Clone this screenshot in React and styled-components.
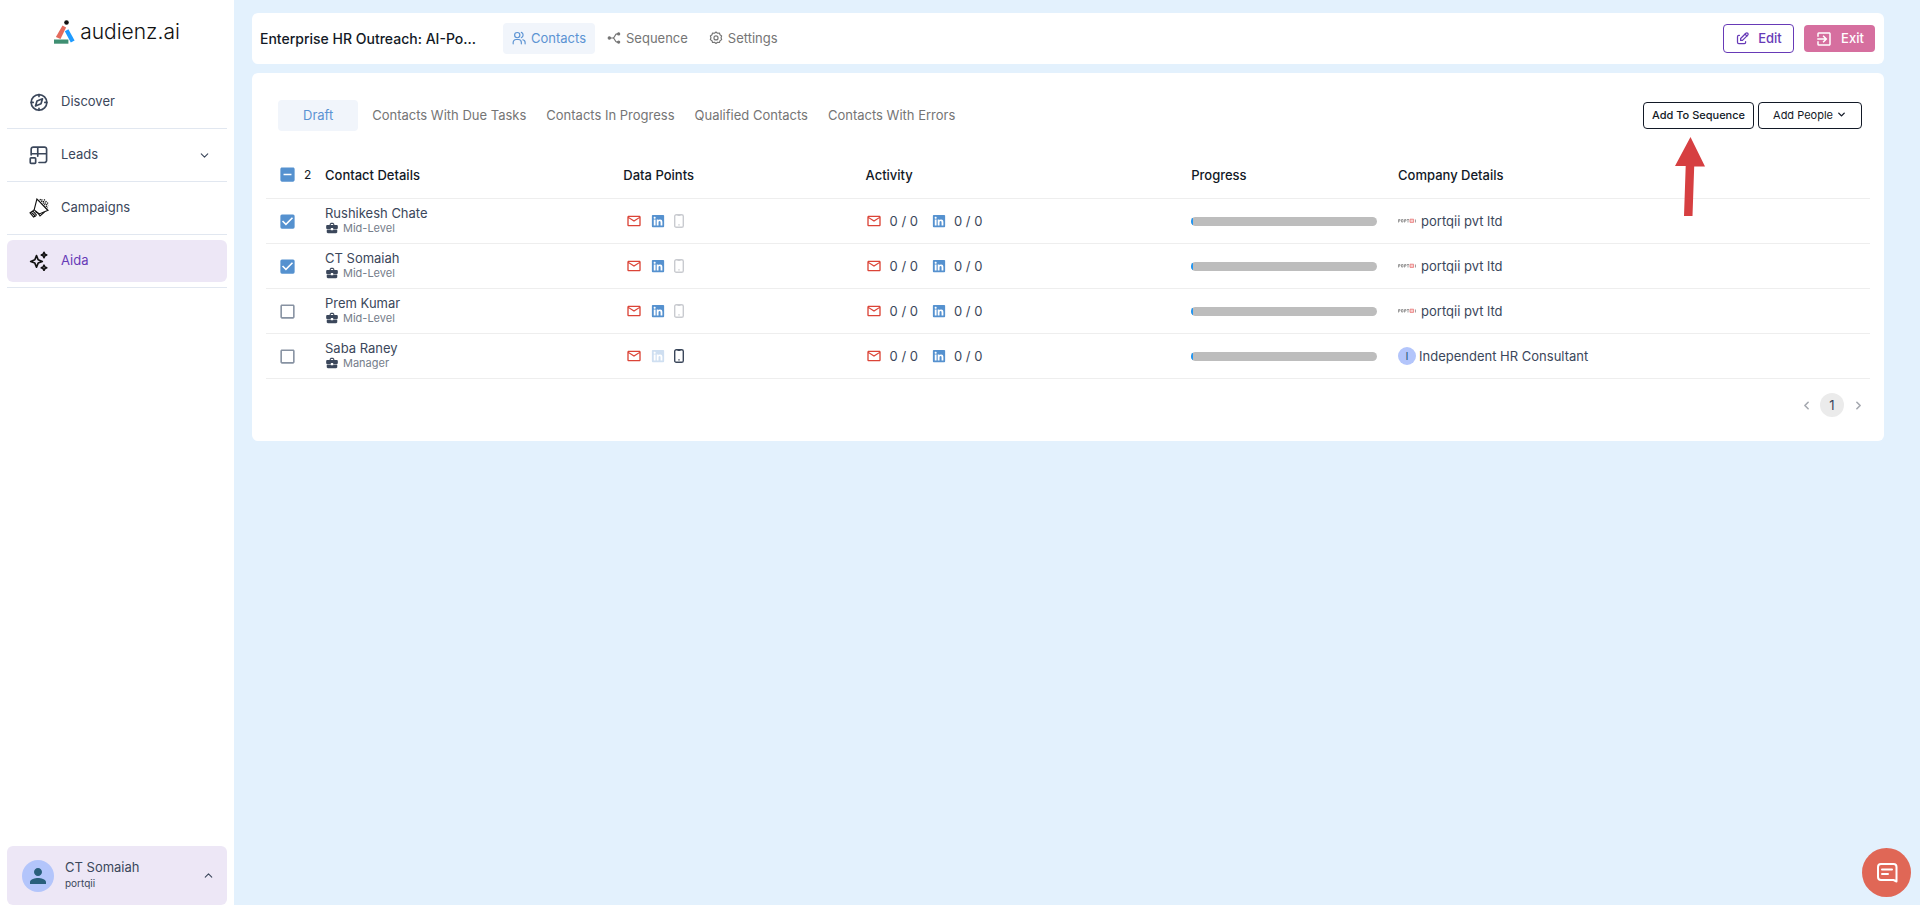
import { useState } from "react";
import styled, { createGlobalStyle, css } from "styled-components";
import {
  MdBusinessCenter,
  MdCheckBox,
  MdCheckBoxOutlineBlank,
  MdExitToApp,
  MdIndeterminateCheckBox,
  MdMailOutline,
  MdPerson,
} from "react-icons/md";
import { TbEdit } from "react-icons/tb";
import { FaLinkedin } from "react-icons/fa";
import { ChevronDown, ChevronLeft, ChevronRight, ChevronUp } from "lucide-react";

const GlobalStyle = createGlobalStyle`
  * {
    box-sizing: border-box;
  }

  body {
    margin: 0;
    background: #e3f1fd;
    color: #3b475b;
    font-family: Inter, "Liberation Sans", sans-serif;
    font-size: 13px;
    line-height: 16px;
  }

  button {
    font: inherit;
    cursor: pointer;
  }
`;

const Page = styled.div`
  display: flex;
  min-height: 100vh;
`;

// Sidebar
const Sidebar = styled.aside`
  position: sticky;
  top: 0;
  display: flex;
  flex-direction: column;
  flex: 0 0 234px;
  height: 100vh;
  padding: 0 7px;
  background: #fff;
`;

const Brand = styled.a`
  display: flex;
  align-items: center;
  justify-content: center;
  gap: 5px;
  height: 76px;
  padding-bottom: 12px;
  color: #111;
  font-size: 21px;
  font-weight: 300;
  line-height: 24px;
  text-decoration: none;
`;

const NavItem = styled.div`
  padding: 5px 0;
  border-bottom: 1px solid #e1e7f0;
`;

const NavLink = styled.a`
  display: flex;
  align-items: center;
  height: 42px;
  padding: 0 16px 0 22px;
  border-radius: 6px;
  background: ${(props) => (props.$active ? "#ede7f6" : "transparent")};
  color: ${(props) => (props.$active ? "#673ab7" : "#3b475b")};
  text-decoration: none;

  svg:first-child {
    flex: none;
    margin-right: 12px;
  }

  span {
    flex: 1;
    padding-bottom: 2px;
  }
`;

const UserCard = styled.button`
  display: flex;
  align-items: center;
  gap: 11px;
  height: 59px;
  margin-top: auto;
  padding: 0 12px 0 15px;
  border: 0;
  border-radius: 6px;
  background: #ede7f6;
  color: #3b475b;
  text-align: left;
`;

const Avatar = styled.span`
  display: flex;
  flex: none;
  align-items: center;
  justify-content: center;
  width: ${(props) => props.$size}px;
  height: ${(props) => props.$size}px;
  border-radius: 50%;
  background: #b3c5fb;
  color: #285f7c;
  font-size: 11px;
`;

const UserText = styled.span`
  display: flex;
  flex: 1;
  flex-direction: column;
  padding-bottom: 2px;

  small {
    font-size: 10px;
  }
`;

// Main column
const Main = styled.main`
  display: flex;
  flex: 1;
  flex-direction: column;
  gap: 9px;
  min-width: 0;
  padding: 13px 36px 13px 18px;
`;

const TopBar = styled.header`
  display: flex;
  align-items: center;
  height: 51px;
  padding: 0 9px 0 8px;
  border-radius: 6px;
  background: #fff;
`;

const Title = styled.h1`
  width: 226px;
  margin: 0 17px 0 0;
  color: #121926;
  font-size: 14px;
  font-weight: 500;
  line-height: 20px;
  white-space: nowrap;
`;

const TopTabs = styled.nav`
  display: flex;
  gap: 3px;
  margin-right: auto;
`;

const tabStyle = css`
  display: flex;
  align-items: center;
  height: 31px;
  border: 0;
  border-radius: 4px;
  background: ${(props) => (props.$active ? "#f1f5fb" : "transparent")};
  color: ${(props) => (props.$active ? "#5b93d3" : "#757575")};
`;

const TopTab = styled.button`
  ${tabStyle}
  gap: 5px;
  padding: 0 9px 2px;
`;

const Actions = styled.div`
  display: flex;
  align-items: center;
  gap: 10px;
`;

const ActionButton = styled.button`
  display: flex;
  align-items: center;
  justify-content: center;
  gap: 8px;
  width: 71px;
  height: ${(props) => (props.$filled ? 27 : 29)}px;
  padding: 0;
  border: ${(props) => (props.$filled ? "0" : "1px solid #673ab7")};
  border-radius: 4px;
  background: ${(props) => (props.$filled ? "#d66f9f" : "#fff")};
  color: ${(props) => (props.$filled ? "#fff" : "#673ab7")};
  font-weight: 500;

  span {
    padding-bottom: 2px;
  }
`;

const Panel = styled.section`
  padding: 27px 14px 24px;
  border-radius: 6px;
  background: #fff;
`;

const PanelBar = styled.div`
  display: flex;
  align-items: center;
  justify-content: space-between;
  padding: 0 8px 0 12px;
`;

const Filters = styled.div`
  display: flex;
`;

const Filter = styled.button`
  ${tabStyle}
  padding: 0 ${(props) => (props.$active ? 25 : 10)}px 2px;
  margin-right: ${(props) => (props.$active ? 4 : 0)}px;
`;

const PanelActions = styled.div`
  position: relative;
  display: flex;
  gap: 4px;
`;

const OutlineButton = styled.button`
  display: flex;
  align-items: center;
  justify-content: center;
  gap: 3px;
  height: 27px;
  padding: 0 ${(props) => (props.$wide ? 14 : 8)}px 2px;
  border: 1px solid #121926;
  border-radius: 4px;
  background: #fff;
  color: #121926;
  font-size: 11px;
  font-weight: ${(props) => (props.$wide ? 400 : 500)};
`;

const Pointer = styled.svg`
  position: absolute;
  top: 35px;
  left: 32px;
  pointer-events: none;
`;

// Contacts table
const Table = styled.table`
  width: 100%;
  margin-top: 20px;
  border-collapse: separate;
  border-spacing: 0;
  table-layout: fixed;

  th,
  td {
    padding: 0;
    border-bottom: 1px solid #eeeeee;
    text-align: left;
    vertical-align: middle;
  }

  th {
    height: 48px;
    color: #121926;
    font-weight: 500;
  }

  td {
    height: 45px;
  }
`;

const Col = styled.col`
  width: ${(props) => props.$width};
`;

const CheckCell = styled.div`
  display: flex;
  align-items: center;
  gap: 7px;
  padding-left: 12px;
  font-size: 12px;
  font-weight: 400;
`;

const CheckLabel = styled.label`
  position: relative;
  display: flex;
  color: ${(props) => (props.$on ? "#5591cf" : "#8792a2")};
  cursor: pointer;

  input {
    position: absolute;
    inset: 0;
    margin: 0;
    opacity: 0;
  }
`;

const Contact = styled.div`
  padding-bottom: 2px;
`;

const Level = styled.div`
  display: flex;
  align-items: center;
  gap: 4px;
  color: #757d8a;
  font-size: 11px;
  line-height: 14px;

  svg {
    color: #3b475b;
  }
`;

const Points = styled.div`
  display: flex;
  align-items: center;
  gap: 9px;
  padding-left: 3px;
`;

const IconTint = styled.span`
  display: flex;
  color: ${(props) => props.$color};
`;

const Activity = styled.div`
  display: flex;
  align-items: center;
  gap: 8px;

  span + svg {
    margin-left: 6px;
  }
`;

const Track = styled.div`
  width: 90%;
  height: 9px;
  overflow: hidden;
  border-radius: 5px;
  background: #bdbdbd;
`;

const Fill = styled.div`
  height: 100%;
  background: #2196f3;
`;

const Company = styled.div`
  display: flex;
  align-items: center;
  gap: ${(props) => (props.$logo ? 5 : 3)}px;
`;

const Pagination = styled.nav`
  display: flex;
  align-items: center;
  justify-content: flex-end;
  gap: 4px;
  margin-top: 14px;
  padding-right: 2px;
`;

const PageButton = styled.button`
  display: flex;
  align-items: center;
  justify-content: center;
  width: ${(props) => (props.$current ? 24 : 20)}px;
  height: 24px;
  padding: 0;
  border: 0;
  border-radius: 50%;
  background: ${(props) => (props.$current ? "#ebebeb" : "transparent")};
  color: ${(props) => (props.$current ? "#3b475b" : "#a5a9b0")};
`;

const ChatButton = styled.button`
  position: fixed;
  right: 9px;
  bottom: 8px;
  display: flex;
  align-items: center;
  justify-content: center;
  width: 49px;
  height: 49px;
  padding: 0;
  border: 0;
  border-radius: 50%;
  background: #e06756;
  color: #fff;
`;

// Drawings
const LogoMark = () => (
  <svg width="21" height="24" viewBox="0 0 21 24">
    <circle cx="12.5" cy="2.5" r="2.3" fill="#111" />
    <path d="M8.5 5.6l3.6 1.8-5.6 11.6-4.6-2z" fill="#e36a5c" />
    <path d="M10.8 11.2l3.6-2 6.2 11.2-3.8 2z" fill="#1e9bff" />
    <path d="M0 19.5h14.4v4.2H0z" fill="#3f8f72" />
  </svg>
);

const Stroke = ({ size = 20, width = 2, children }) => (
  <svg
    width={size}
    height={size}
    viewBox="0 0 24 24"
    fill="none"
    stroke="currentColor"
    strokeWidth={width}
    strokeLinecap="round"
    strokeLinejoin="round"
  >
    {children}
  </svg>
);

const DiscoverIcon = () => (
  <Stroke>
    <circle cx="12" cy="12.5" r="9.4" />
    <path d="M12 3v2.5M12 19.5V22M2.6 12.5H5M19 12.5h2.4" />
    <path d="M16.2 8.2l-1.8 6-6.6 2.6 1.8-6z" />
  </Stroke>
);

const LeadsIcon = () => (
  <Stroke>
    <path d="M2.6 12V5a2.500 2.500 0 0 1 2.500-2.500h13.500a2.500 2.500 0 0 1 2.500 2.500v13.500a2.500 2.500 0 0 1-2.500 2.500H12M2.6 10.500h18.500M10.500 2.500v11" />
    <rect x="1.5" y="15.5" width="6.5" height="6.5" rx="1" />
  </Stroke>
);

const CampaignIcon = () => (
  <svg width="20" height="20" viewBox="0 0 24 24" fill="none" stroke="#111" strokeWidth="1.3">
    <path d="M9.5 1.2L6.2 14.2l6 5L23 14.8z" />
    <path d="M6.2 14.2l-5 3.6 4.3 5 3.6-2M12.2 19.2l-4.6-3M2.5 16.8l5.5 5.4M4.5 15.4l4.6 5.2" />
    <path d="M11.6 19l1.6 2.4 5.4-4.6" />
    <path d="M11 2.200l10.500 12" strokeWidth="1" />
    <path d="M13 1.500l9.500 10.500M15 1.800l8 8M18 1.800l5 5" strokeWidth="1.5" strokeDasharray="1.500 1.200" />
  </svg>
);

const AidaIcon = () => (
  <svg width="20" height="20" viewBox="0 0 24 24" fill="none" stroke="#111" strokeWidth="2" strokeLinejoin="round">
    <path d="M9 5.5l2 5 5 2-5 2-2 5-2-5-5-2 5-2z" />
    <path d="M18 1.6l1 2.2 2.2 1-2.2 1-1 2.2-1-2.2-2.2-1 2.2-1zM18 17l1 2.2 2.2 1-2.2 1-1 2.2-1-2.2-2.2-1 2.2-1z" />
  </svg>
);

const ContactsIcon = () => (
  <Stroke size={14}>
    <circle cx="9" cy="7" r="4.5" />
    <path d="M2 22v-2.5a5 5 0 0 1 5-5h4a5 5 0 0 1 5 5V22M16 2.4a5 5 0 0 1 0 9.2M18.5 15a5 5 0 0 1 4 4.8V22" />
  </Stroke>
);

const SequenceIcon = () => (
  <Stroke size={14}>
    <circle cx="4" cy="12" r="2" fill="currentColor" />
    <path d="M6 12h5M19 5h-2c-4 0-3 7-7 7 4 0 3 7 7 7h2" />
    <circle cx="20" cy="5" r="1.8" fill="currentColor" />
    <circle cx="20" cy="19" r="1.8" fill="currentColor" />
  </Stroke>
);

const SettingsIcon = () => (
  <Stroke size={14}>
    <path d="M12 1.8l2.6 2 3.3-.3 1 3.1 2.8 1.8-1 3.2 1 3.2-2.8 1.8-1 3.1-3.3-.3-2.6 2-2.6-2-3.3.3-1-3.1-2.8-1.8 1-3.2-1-3.2 2.8-1.8 1-3.1 3.3.3z" />
    <circle cx="12" cy="11.8" r="3.5" />
  </Stroke>
);

const PhoneIcon = () => (
  <svg width="10" height="14" viewBox="0 0 10 14" fill="none" stroke="currentColor">
    <rect x="0.7" y="0.7" width="8.6" height="12.6" rx="1.6" strokeWidth="1.4" />
    <path d="M3.500 1.400h3M4.300 10.800h1.400" strokeWidth="1.2" />
  </svg>
);

const ChatIcon = () => (
  <Stroke size={24}>
    <path d="M21.5 20.5l-3-1.5H6a3 3 0 0 1-3-3V6a3 3 0 0 1 3-3h12.500a3 3 0 0 1 3 3z" />
    <path d="M7 8.500h10M7 13h6" />
  </Stroke>
);

const PortqiiLogo = () => (
  <svg width="18" height="6" viewBox="0 0 18 6">
    <g fill="none" stroke="#888" strokeWidth="0.8">
      <path d="M.5 4.500V1.500h1.500v1.500H.5M3.500 1.500h1.500v2.500H3.500zM6.500 4.500V1.500H8v1.500H6.500M9 1.500h2M10 1.500v3M17.500 1.500v3" />
    </g>
    <path d="M12 1.200h3.600v3.200H12z" fill="#f9d0d0" stroke="#e87575" strokeWidth="0.8" />
  </svg>
);

const navItems = [
  { label: "Discover", icon: DiscoverIcon },
  { label: "Leads", icon: LeadsIcon, expandable: true },
  { label: "Campaigns", icon: CampaignIcon },
  { label: "Aida", icon: AidaIcon, active: true },
];

const topTabs = [
  { label: "Contacts", icon: ContactsIcon },
  { label: "Sequence", icon: SequenceIcon },
  { label: "Settings", icon: SettingsIcon },
];

const filters = [
  "Draft",
  "Contacts With Due Tasks",
  "Contacts In Progress",
  "Qualified Contacts",
  "Contacts With Errors",
];

const contacts = [
  { name: "Rushikesh Chate", level: "Mid-Level", company: "portqii pvt ltd", linkedin: true, logo: true, progress: 1 },
  { name: "CT Somaiah", level: "Mid-Level", company: "portqii pvt ltd", linkedin: true, logo: true, progress: 1 },
  { name: "Prem Kumar", level: "Mid-Level", company: "portqii pvt ltd", linkedin: true, logo: true, progress: 1 },
  { name: "Saba Raney", level: "Manager", company: "Independent HR Consultant", phone: true, progress: 1 },
];

const Check = ({ label, checked, mixed, onChange }) => {
  const Icon = mixed ? MdIndeterminateCheckBox : checked ? MdCheckBox : MdCheckBoxOutlineBlank;
  return (
    <CheckLabel $on={checked || mixed}>
      <input type="checkbox" aria-label={label} checked={checked} onChange={onChange} />
      <Icon size={19} />
    </CheckLabel>
  );
};

const ContactRow = ({ contact, checked, onToggle }) => (
  <tr>
    <td>
      <CheckCell>
        <Check label={`Select ${contact.name}`} checked={checked} onChange={onToggle} />
      </CheckCell>
    </td>
    <td>
      <Contact>
        {contact.name}
        <Level>
          <MdBusinessCenter size={14} />
          {contact.level}
        </Level>
      </Contact>
    </td>
    <td>
      <Points>
        <IconTint $color="#db4437">
          <MdMailOutline size={16} />
        </IconTint>
        <IconTint $color={contact.linkedin ? "#5591cf" : "#cfdff1"}>
          <FaLinkedin size={14} />
        </IconTint>
        <IconTint $color={contact.phone ? "#3b475b" : "#c9cbd0"}>
          <PhoneIcon />
        </IconTint>
      </Points>
    </td>
    <td>
      <Activity>
        <MdMailOutline size={16} color="#db4437" />
        <span>0 / 0</span>
        <FaLinkedin size={14} color="#5591cf" />
        <span>0 / 0</span>
      </Activity>
    </td>
    <td>
      <Track>
        <Fill style={{ width: `${contact.progress}%` }} />
      </Track>
    </td>
    <td>
      <Company $logo={contact.logo}>
        {contact.logo ? <PortqiiLogo /> : <Avatar $size={18}>{contact.company[0]}</Avatar>}
        {contact.company}
      </Company>
    </td>
  </tr>
);

const App = () => {
  const [tab, setTab] = useState("Contacts");
  const [filter, setFilter] = useState("Draft");
  const [selected, setSelected] = useState([0, 1]);

  const toggle = (index) =>
    setSelected((prev) =>
      prev.includes(index) ? prev.filter((i) => i !== index) : [...prev, index]
    );

  const allSelected = selected.length === contacts.length;
  const toggleAll = () => setSelected(allSelected ? [] : contacts.map((_, i) => i));

  return (
    <>
      <GlobalStyle />
      <Page>
        <Sidebar>
          <Brand href="#">
            <LogoMark />
            audienz.ai
          </Brand>
          <nav>
            {navItems.map(({ label, icon: Icon, active, expandable }) => (
              <NavItem key={label}>
                <NavLink href="#" $active={active}>
                  <Icon />
                  <span>{label}</span>
                  {expandable && <ChevronDown size={13} />}
                </NavLink>
              </NavItem>
            ))}
          </nav>
          <UserCard>
            <Avatar $size={32}>
              <MdPerson size={24} />
            </Avatar>
            <UserText>
              CT Somaiah
              <small>portqii</small>
            </UserText>
            <ChevronUp size={13} />
          </UserCard>
        </Sidebar>

        <Main>
          <TopBar>
            <Title>Enterprise HR Outreach: AI-Po...</Title>
            <TopTabs>
              {topTabs.map(({ label, icon: Icon }) => (
                <TopTab key={label} $active={tab === label} onClick={() => setTab(label)}>
                  <Icon />
                  {label}
                </TopTab>
              ))}
            </TopTabs>
            <Actions>
              <ActionButton>
                <TbEdit size={15} />
                <span>Edit</span>
              </ActionButton>
              <ActionButton $filled>
                <MdExitToApp size={18} />
                <span>Exit</span>
              </ActionButton>
            </Actions>
          </TopBar>

          <Panel>
            <PanelBar>
              <Filters>
                {filters.map((label) => (
                  <Filter key={label} $active={filter === label} onClick={() => setFilter(label)}>
                    {label}
                  </Filter>
                ))}
              </Filters>
              <PanelActions>
                <OutlineButton>Add To Sequence</OutlineButton>
                <OutlineButton $wide>
                  Add People
                  <ChevronDown size={11} strokeWidth={3} />
                </OutlineButton>
                <Pointer width="30" height="80" viewBox="0 0 30 80">
                  <path d="M15.500 0L30 29.500H19.200L17.500 79H9l1.700-50H0z" fill="#d63f41" />
                </Pointer>
              </PanelActions>
            </PanelBar>

            <Table>
              <colgroup>
                <Col $width="59px" />
                <Col $width="18.6%" />
                <Col $width="15.1%" />
                <Col $width="20.3%" />
                <Col $width="12.9%" />
                <Col />
              </colgroup>
              <thead>
                <tr>
                  <th>
                    <CheckCell>
                      <Check
                        label="Select all contacts"
                        checked={allSelected}
                        mixed={selected.length > 0 && !allSelected}
                        onChange={toggleAll}
                      />
                      {selected.length}
                    </CheckCell>
                  </th>
                  <th>Contact Details</th>
                  <th>Data Points</th>
                  <th>Activity</th>
                  <th>Progress</th>
                  <th>Company Details</th>
                </tr>
              </thead>
              <tbody>
                {contacts.map((contact, index) => (
                  <ContactRow
                    key={contact.name}
                    contact={contact}
                    checked={selected.includes(index)}
                    onToggle={() => toggle(index)}
                  />
                ))}
              </tbody>
            </Table>

            <Pagination aria-label="Pages">
              <PageButton aria-label="Previous page">
                <ChevronLeft size={13} strokeWidth={3} />
              </PageButton>
              <PageButton $current>1</PageButton>
              <PageButton aria-label="Next page">
                <ChevronRight size={13} strokeWidth={3} />
              </PageButton>
            </Pagination>
          </Panel>
        </Main>
      </Page>
      <ChatButton aria-label="Open chat">
        <ChatIcon />
      </ChatButton>
    </>
  );
};

export default App;
